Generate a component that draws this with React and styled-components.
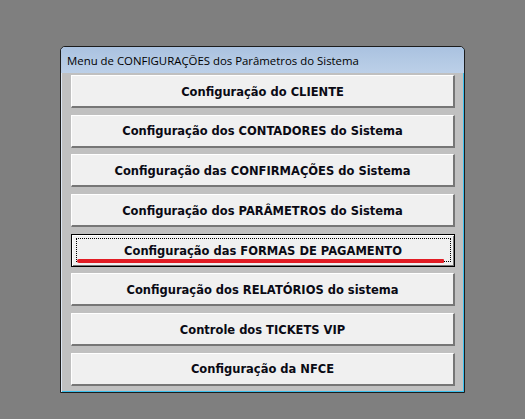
import styled, { createGlobalStyle } from 'styled-components';

const GlobalStyle = createGlobalStyle`
    html, body {
        margin: 0;
        padding: 0;
        background: #7f7f7f;
        width: 525px;
        height: 419px;
        overflow: hidden;
    }
`;

const ITEMS = [
    { title: 'Configuração do CLIENTE' },
    { title: 'Configuração dos CONTADORES do Sistema' },
    { title: 'Configuração das CONFIRMAÇÕES do Sistema' },
    { title: 'Configuração dos PARÂMETROS do Sistema' },
    { title: 'Configuração das FORMAS DE PAGAMENTO', focused: true },
    { title: 'Configuração dos RELATÓRIOS do sistema' },
    { title: 'Controle dos TICKETS VIP' },
    { title: 'Configuração da NFCE' },
];

function App() {
    return (
        <Page>
            <GlobalStyle />
            <Window>
                <TitleBar>Menu de CONFIGURAÇÕES dos Parâmetros do Sistema</TitleBar>
                <Client>
                    {ITEMS.map((item) => (
                        <MenuButton key={item.title} $focused={item.focused}>
                            {item.focused && <FocusRect />}
                            <Label>{item.title}</Label>
                            {item.focused && <Mark />}
                        </MenuButton>
                    ))}
                </Client>
            </Window>
        </Page>
    );
}
export default App;

const Page = styled.div`
    padding: 46px 0 0 60px;
`;

const Window = styled.div`
    width: 403px;
    height: 345px;
    border: 1px solid #1c1c1c;
    border-radius: 5px 5px 0 0;
    background: linear-gradient(#a9c1df, #bcd0e8 30px);
    display: flex;
    flex-direction: column;
    box-shadow: inset 1px 1px 0 #dce6f2, inset -1px -1px 0 #3ac0ee;
    overflow: hidden;
`;

const TitleBar = styled.div`
    height: 26px;
    padding-left: 6px;
    display: flex;
    align-items: center;
    font-family: "Open Sans", "Noto Sans", sans-serif;
    font-size: 11.4px;
    color: #000;
    white-space: nowrap;
    background: linear-gradient(#aac2e0, #bcd0e8);
    border-radius: 4px 4px 0 0;
`;

const Client = styled.div`
    flex: 1;
    margin: 0 1px 1px 1px;
    background: #c0c0c0;
    padding: 2px 8px 4px 9px;
    display: grid;
    grid-template-rows: repeat(8, 33px);
    row-gap: 6.7px;
    box-shadow: 0 1px 0 #3ac0ee;
`;

const MenuButton = styled.div`
    position: relative;
    box-sizing: border-box;
    background: #f0f0f0;
    border-top: 1px solid #ffffff;
    border-left: 1px solid #ffffff;
    border-right: 2px solid #767676;
    border-bottom: 2px solid #767676;
    display: flex;
    align-items: center;
    justify-content: center;
    padding-top: 1px;
    ${(p) => p.$focused && `
        border: 1px solid #000;
        box-shadow: inset 1px 1px 0 #fff, inset -1px -1px 0 #767676;
    `}
`;

const Label = styled.span`
    font-family: "DejaVu Sans", Verdana, sans-serif;
    font-weight: bold;
    font-size: 11.5px;
    color: #0a0a14;
    white-space: nowrap;
`;

const FocusRect = styled.span`
    position: absolute;
    left: 4px;
    right: 3px;
    top: 3px;
    bottom: 4px;
    border: 1px dotted #000;
`;

const Mark = styled.span`
    position: absolute;
    left: 5px;
    right: 10px;
    bottom: 3px;
    height: 4px;
    background: #e21c24;
    border-radius: 2px 1px 1px 2px;
`;
